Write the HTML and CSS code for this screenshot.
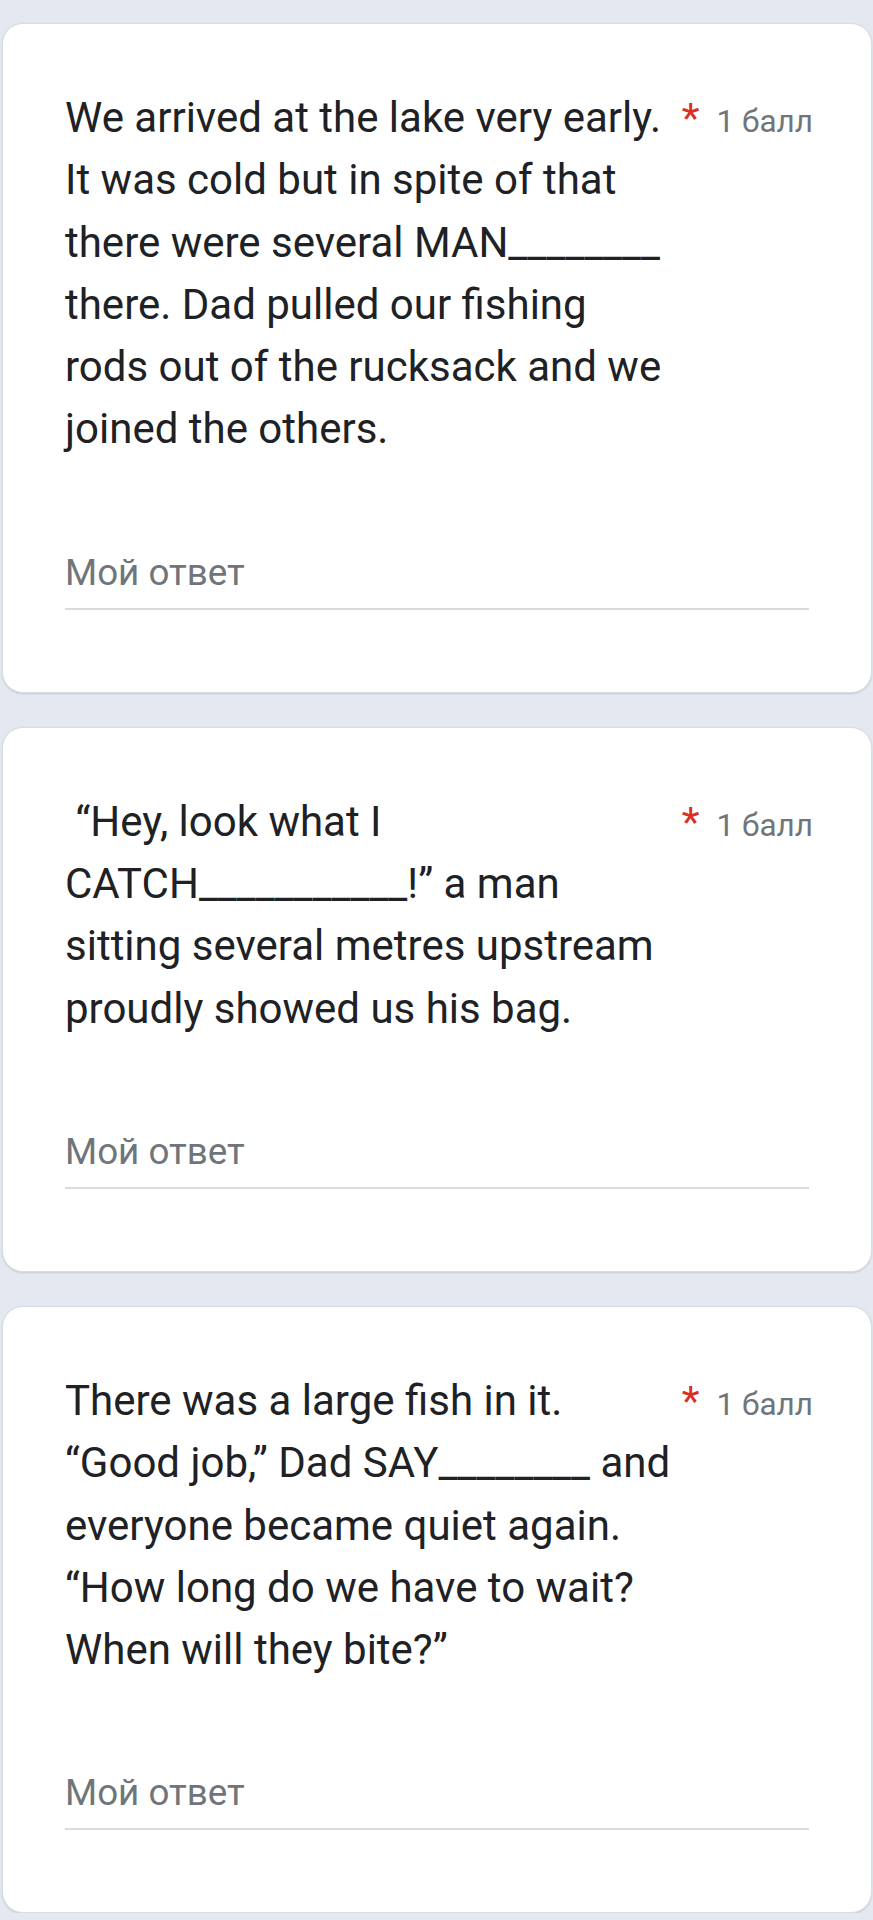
FILE: index.html
```html
<!DOCTYPE html>
<html>
<head>
<meta charset="utf-8">
<link rel="stylesheet" href="styles.css">
</head>
<body>
<div class="page">
  <div class="card">
    <div class="q-head">
      <div class="q-title">We arrived at the lake very early.<br>It was cold but in spite of that<br>there were several MAN________<br>there. Dad pulled our fishing<br>rods out of the rucksack and we<br>joined the others.</div>
      <div class="q-meta"><span class="req">*</span><span class="pts">1 балл</span></div>
    </div>
    <div class="answer"><div class="answer-input">Мой ответ</div></div>
  </div>
  <div class="card">
    <div class="q-head">
      <div class="q-title">&nbsp;“Hey, look what I<br>CATCH___________!” a man<br>sitting several metres upstream<br>proudly showed us his bag.</div>
      <div class="q-meta"><span class="req">*</span><span class="pts">1 балл</span></div>
    </div>
    <div class="answer"><div class="answer-input">Мой ответ</div></div>
  </div>
  <div class="card">
    <div class="q-head">
      <div class="q-title">There was a large fish in it.<br>“Good job,” Dad SAY________ and<br>everyone became quiet again.<br>“How long do we have to wait?<br>When will they bite?”</div>
      <div class="q-meta"><span class="req">*</span><span class="pts">1 балл</span></div>
    </div>
    <div class="answer"><div class="answer-input">Мой ответ</div></div>
  </div>
</div>
</body>
</html>
```
FILE: styles.css
```css
html, body {
  margin: 0;
  padding: 0;
  background: #e4e9f1;
}
body {
  font-family: Roboto, "Noto Sans", Arial, sans-serif;
  color: #202124;
}
.page {
  display: flex;
  flex-direction: column;
  gap: 34px;
  padding: 23px 1px 0 2px;
}
.card {
  background: #ffffff;
  border: 1px solid #dadce0;
  border-radius: 21px;
  box-shadow: 0 1px 2px rgba(60, 64, 67, 0.18);
  padding: 63px 62px 82px 62px;
}
.q-head {
  display: flex;
  align-items: baseline;
}
.q-title {
  flex: 1;
  min-width: 0;
  font-size: 42px;
  line-height: 62.3px;
  white-space: nowrap;
}
.q-meta {
  display: flex;
  align-items: baseline;
  flex-shrink: 0;
  margin-right: -4px;
  font-size: 41.3px;
  line-height: 62px;
}
.req {
  color: #d93025;
  margin-right: 17px;
}
.pts {
  font-size: 31.5px;
  color: #70757a;
}
.answer {
  margin-top: 88px;
}
.answer-input {
  font-size: 36.8px;
  line-height: 48px;
  color: #70757a;
  padding-bottom: 11px;
  border-bottom: 2px solid #d9dadd;
}
```
